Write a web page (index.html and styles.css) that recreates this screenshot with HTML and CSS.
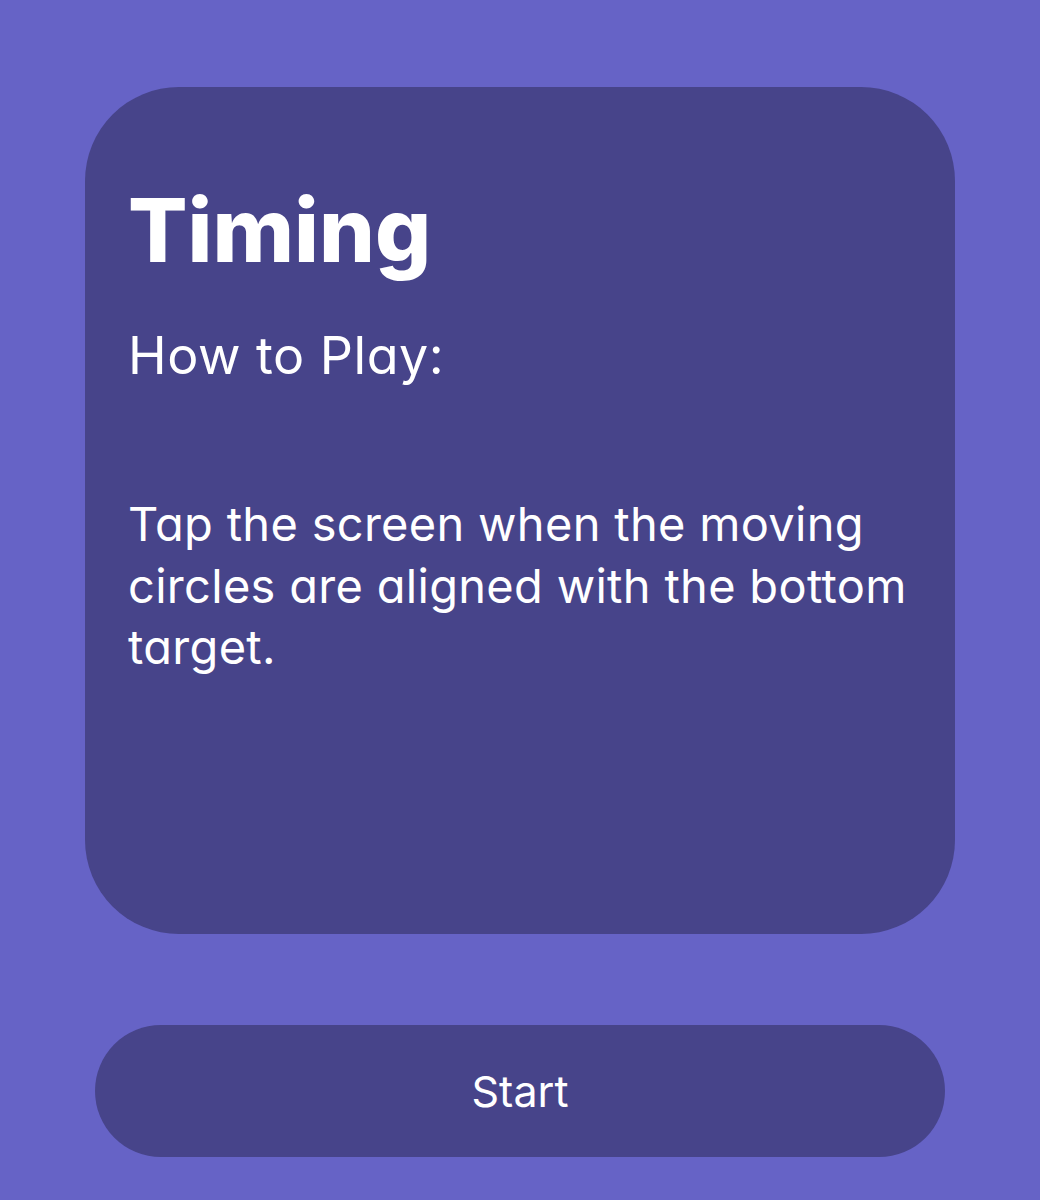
FILE: index.html
```html
<!DOCTYPE html>
<html>
<head lang="en">
    <meta charset="UTF-8">
    <title>Timing</title>
    <link rel="stylesheet" href="styles.css">
</head>
<body>
<div class="screen">
    <div class="card">
        <h1 class="title">Timing</h1>
        <p class="subtitle">How to Play:</p>
        <p class="desc">Tap the screen when the moving circles are aligned with the bottom target.</p>
    </div>
    <button class="startbtn">Start</button>
</div>
</body>
</html>
```
FILE: styles.css
```css
*{
    margin: 0;
    padding: 0;
    box-sizing: border-box;
}
body{
    background: #6663c6;
    width: 1040px;
    height: 1200px;
    overflow: hidden;
}
.screen{
    display: flex;
    flex-direction: column;
    padding: 87px 85px 0 85px;
}
.card{
    height: 847px;
    background: #47448a;
    border-radius: 94px;
    padding: 98px 43px 0 43px;
    color: #fff;
    font-family: Inter, "Noto Sans", sans-serif;
    font-feature-settings: "cv11";
}
.title{
    font-size: 88px;
    font-weight: 800;
    line-height: 90px;
}
.subtitle{
    margin-top: 51px;
    font-size: 52px;
    font-weight: 400;
    line-height: 60px;
    letter-spacing: 0.5px;
}
.desc{
    margin-top: 107px;
    font-size: 47px;
    font-weight: 400;
    line-height: 61.5px;
    letter-spacing: 0.3px;
    width: 820px;
}
.startbtn{
    margin: 91px 10px 0 10px;
    height: 132px;
    border: none;
    border-radius: 66px;
    background: #47448a;
    color: #fff;
    font-family: Inter, "Liberation Sans", sans-serif;
    font-size: 43px;
    font-weight: 400;
}
```
